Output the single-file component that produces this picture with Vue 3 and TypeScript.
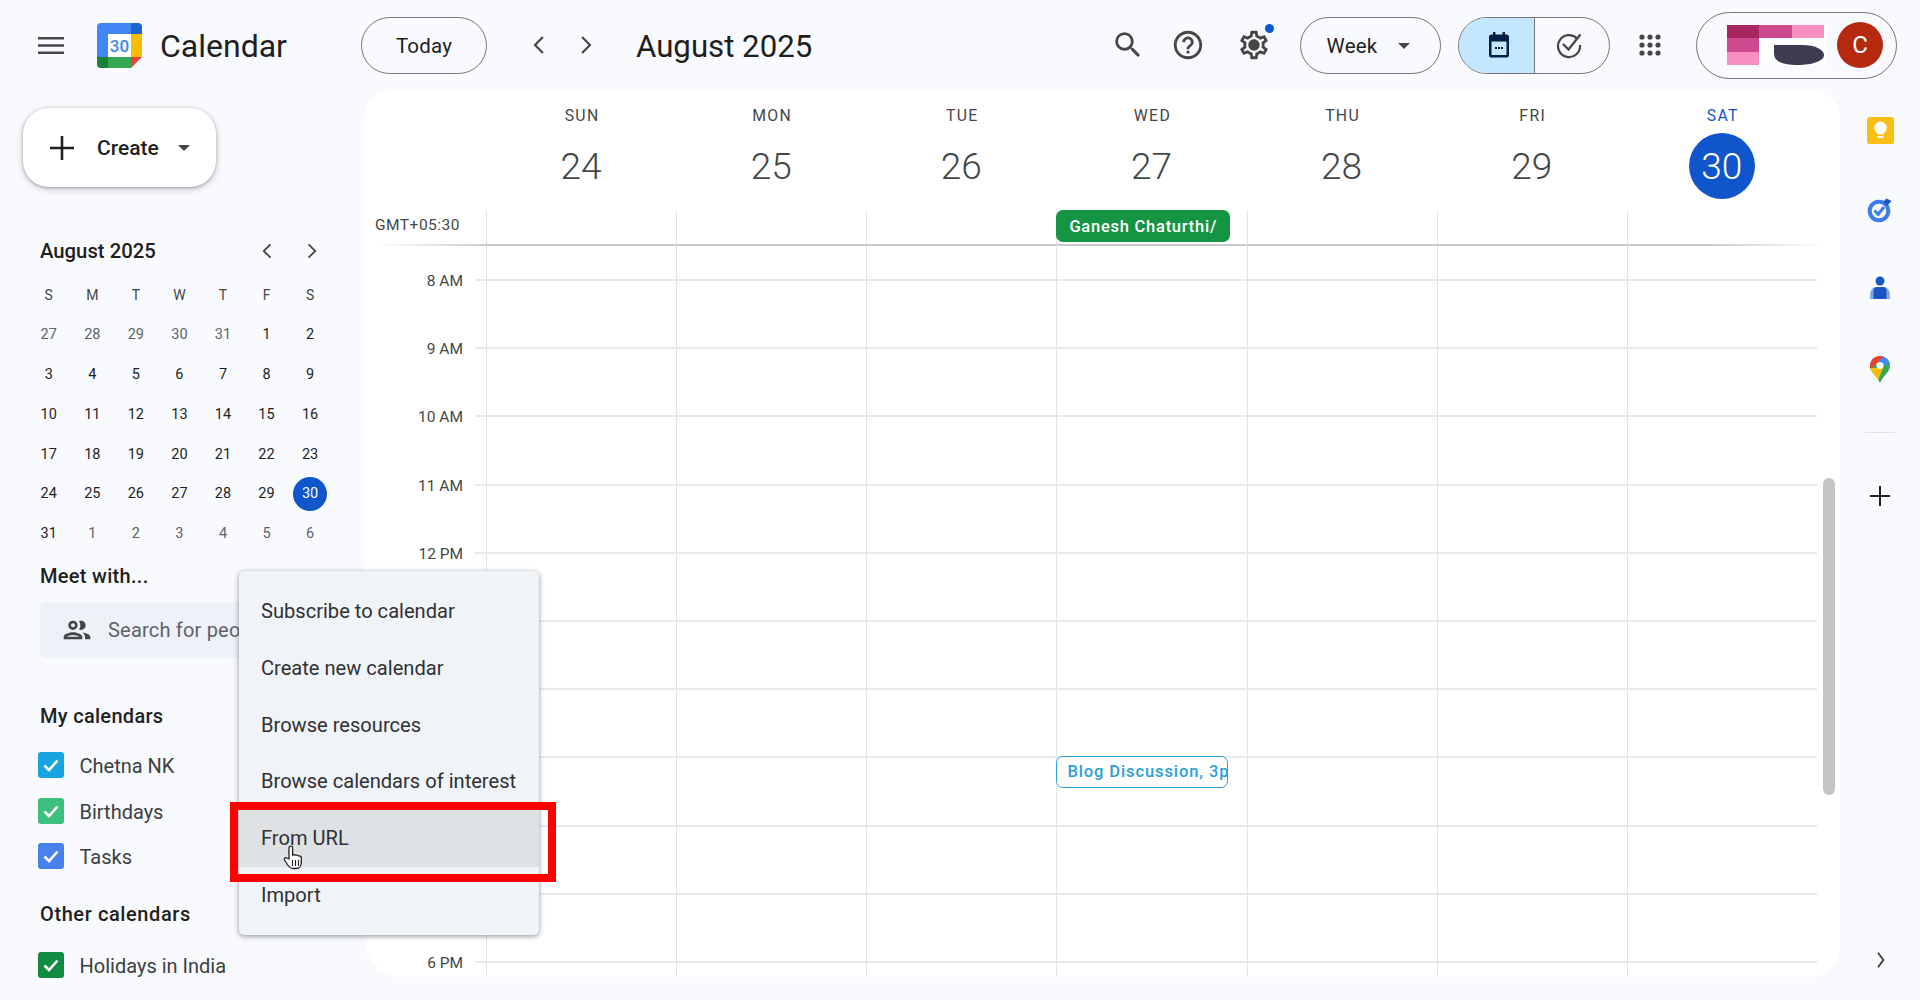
<script setup lang="ts">
interface MiniDay { n: number; muted: boolean; selected: boolean }
interface WeekDay { name: string; num: number; today: boolean }
interface Cal { name: string; color: string }

const weekLetters: string[] = ['S', 'M', 'T', 'W', 'T', 'F', 'S']
const miniRaw: number[] = [27,28,29,30,31,1,2,3,4,5,6,7,8,9,10,11,12,13,14,15,16,17,18,19,20,21,22,23,24,25,26,27,28,29,30,31,1,2,3,4,5,6]
const miniDays: MiniDay[] = miniRaw.map((n, i) => ({
  n,
  muted: i < 5 || i > 35,
  selected: i === 34,
}))
const week: WeekDay[] = [
  { name: 'SUN', num: 24, today: false },
  { name: 'MON', num: 25, today: false },
  { name: 'TUE', num: 26, today: false },
  { name: 'WED', num: 27, today: false },
  { name: 'THU', num: 28, today: false },
  { name: 'FRI', num: 29, today: false },
  { name: 'SAT', num: 30, today: true },
]
const hours: string[] = ['8 AM','9 AM','10 AM','11 AM','12 PM','1 PM','2 PM','3 PM','4 PM','5 PM','6 PM','7 PM']
const myCals: Cal[] = [
  { name: 'Chetna NK', color: '#18a4e0' },
  { name: 'Birthdays', color: '#3dbf7e' },
  { name: 'Tasks', color: '#4a80ec' },
]
const menuItems: string[] = ['Subscribe to calendar','Create new calendar','Browse resources','Browse calendars of interest','From URL','Import']
</script>

<template>
  <div class="app">
    <header class="top">
      <svg class="burger" viewBox="0 0 26 17"><path d="M0 0h26v2.6H0zM0 7.2h26v2.6H0zM0 14.4h26V17H0z" fill="#444746"/></svg>
      <svg class="logo" viewBox="0 0 45 45">
        <path d="M34 0H4a4 4 0 0 0-4 4v30h11V11h23z" fill="#4285f4"/>
        <path d="M34 0h7a4 4 0 0 1 4 4v7H34z" fill="#1a67d2"/>
        <path d="M34 11h11v23H34z" fill="#fbbc04"/>
        <path d="M11 34h23v11H11z" fill="#34a853"/>
        <path d="M0 34h11v11H4a4 4 0 0 1-4-4z" fill="#188038"/>
        <path d="M34 34h11L34 45z" fill="#ea4335"/>
        <path d="M11 11h23v23H11z" fill="#fff"/>
        <text x="22.5" y="29" text-anchor="middle" class="logo-num">30</text>
      </svg>
      <div class="brand">Calendar</div>
      <button class="pill today-btn">Today</button>
      <svg class="nav first" viewBox="0 0 24 24"><path d="M15.4 5.4 14 4l-8 8 8 8 1.4-1.4L8.8 12z" fill="#444746"/></svg>
      <svg class="nav second" viewBox="0 0 24 24"><path d="M8.6 5.4 10 4l8 8-8 8-1.4-1.4 6.6-6.6z" fill="#444746"/></svg>
      <div class="title">August 2025</div>
      <svg class="tool" viewBox="0 0 24 24"><path fill="#444746" d="M15.5 14h-.79l-.28-.27A6.471 6.471 0 0 0 16 9.5 6.5 6.5 0 1 0 9.5 16c1.61 0 3.09-.59 4.23-1.57l.27.28v.79l5 4.99L20.49 19l-4.99-5zm-6 0C7.01 14 5 11.99 5 9.5S7.01 5 9.5 5 14 7.01 14 9.5 11.99 14 9.5 14z"/></svg>
      <svg class="tool help" viewBox="0 0 24 24"><path fill="#444746" d="M11 18h2v-2h-2v2zm1-16C6.48 2 2 6.48 2 12s4.48 10 10 10 10-4.48 10-10S17.52 2 12 2zm0 18c-4.41 0-8-3.59-8-8s3.59-8 8-8 8 3.59 8 8-3.59 8-8 8zm0-14c-2.21 0-4 1.79-4 4h2c0-1.1.9-2 2-2s2 .9 2 2c0 2-3 1.75-3 5h2c0-2.25 3-2.5 3-5 0-2.21-1.79-4-4-4z"/></svg>
      <div class="gear-wrap">
        <svg class="tool" viewBox="0 0 24 24"><path fill="#444746" d="M19.43 12.98c.04-.32.07-.64.07-.98 0-.34-.03-.66-.07-.98l2.11-1.65c.19-.15.24-.42.12-.64l-2-3.46c-.09-.16-.26-.25-.44-.25-.06 0-.12.01-.17.03l-2.49 1c-.52-.4-1.08-.73-1.69-.98l-.38-2.65C14.46 2.18 14.25 2 14 2h-4c-.25 0-.46.18-.49.42l-.38 2.65c-.61.25-1.17.59-1.69.98l-2.49-1c-.06-.02-.12-.03-.18-.03-.17 0-.34.09-.43.25l-2 3.46c-.13.22-.07.49.12.64l2.11 1.65c-.04.32-.07.65-.07.98 0 .33.03.66.07.98l-2.11 1.65c-.19.15-.24.42-.12.64l2 3.46c.09.16.26.25.44.25.06 0 .12-.01.17-.03l2.49-1c.52.4 1.08.73 1.69.98l.38 2.65c.03.24.24.42.49.42h4c.25 0 .46-.18.49-.42l.38-2.65c.61-.25 1.17-.59 1.69-.98l2.49 1c.06.02.12.03.18.03.17 0 .34-.09.43-.25l2-3.46c.12-.22.07-.49-.12-.64l-2.11-1.65zm-1.98-1.71c.04.31.05.52.05.73 0 .21-.02.43-.05.73l-.14 1.13.89.7 1.08.84-.7 1.21-1.27-.51-1.04-.42-.9.68c-.43.32-.84.56-1.25.73l-1.06.43-.16 1.13-.2 1.35h-1.4l-.19-1.35-.16-1.13-1.06-.43c-.43-.18-.83-.41-1.23-.71l-.91-.7-1.06.43-1.27.51-.7-1.21 1.08-.84.89-.7-.14-1.13c-.03-.31-.05-.54-.05-.74s.02-.43.05-.73l.14-1.13-.89-.7-1.08-.84.7-1.21 1.27.51 1.04.42.9-.68c.43-.32.84-.56 1.25-.73l1.06-.43.16-1.13.2-1.35h1.39l.19 1.35.16 1.13 1.06.43c.43.18.83.41 1.23.71l.91.7 1.06-.43 1.27-.51.7 1.21-1.07.85-.89.7.14 1.13zM12 8c-2.21 0-4 1.79-4 4s1.79 4 4 4 4-1.79 4-4-1.79-4-4-4z"/></svg>
        <span class="dot"></span>
      </div>
      <button class="pill week">Week<span class="caret"></span></button>
      <div class="toggle">
        <div class="tog-left">
          <svg width="26" height="26" viewBox="0 0 26 26"><path fill="#041e49" d="M7 0h2.4v2.5h7.2V0H19v2.5h1.5A2.5 2.5 0 0 1 23 5v18a2.5 2.5 0 0 1-2.5 2.5h-15A2.5 2.5 0 0 1 3 23V5a2.5 2.5 0 0 1 2.5-2.5H7zM5.5 9.5V23h15V9.5zM9 15h2v2H9zm3 0h2v2h-2zm3 0h2v2h-2z"/></svg>
        </div>
        <div class="tog-right">
          <svg width="28" height="28" viewBox="0 0 28 28" fill="none" stroke="#444746" stroke-width="2.2"><path d="M22 7.5A11 11 0 1 0 25 14"/><path d="m8.500 13.500 5 5L25 4" stroke-linecap="round"/></svg>
        </div>
      </div>
      <svg class="apps" viewBox="0 0 24 24"><g fill="#444746"><circle cx="4" cy="4" r="2.6"/><circle cx="12" cy="4" r="2.6"/><circle cx="20" cy="4" r="2.6"/><circle cx="4" cy="12" r="2.6"/><circle cx="12" cy="12" r="2.6"/><circle cx="20" cy="12" r="2.6"/><circle cx="4" cy="20" r="2.6"/><circle cx="12" cy="20" r="2.6"/><circle cx="20" cy="20" r="2.6"/></g></svg>
      <div class="account">
        <svg class="org" viewBox="0 0 100 40">
          <path fill="#fff" d="M0 0h100v40H0z"/>
          <path fill="#a8255f" d="M0 0h32v13H0z"/>
          <path fill="#cc4a8d" d="M32 0h33v13H32zM0 13h32v14H0z"/>
          <path fill="#f78ec0" d="M65 0h32v13H65zM0 27h32v13H0z"/>
          <path fill="#3f3a50" d="M47 20h28c14 0 22 5 22 10 0 6-12 10-26 10-14 0-24-3-24-11z"/>
        </svg>
        <div class="avatar">C</div>
      </div>
    </header>

    <div class="main">
      <aside class="side">
        <button class="create">
          <svg width="24" height="24" viewBox="0 0 24 24"><path d="M10.7 0h2.6v10.7H24v2.6H13.3V24h-2.6V13.3H0v-2.6h10.7z" fill="#1f1f1f"/></svg>
          <span class="create-label">Create</span>
          <span class="caret"></span>
        </button>
        <div class="mini-head">
          <span class="mini-title">August 2025</span>
          <svg class="mini-nav" viewBox="0 0 24 24"><path d="M15.4 5.4 14 4l-8 8 8 8 1.4-1.4L8.8 12z" fill="#444746"/></svg>
          <svg class="mini-nav" viewBox="0 0 24 24"><path d="M8.6 5.4 10 4l8 8-8 8-1.4-1.4 6.6-6.6z" fill="#444746"/></svg>
        </div>
        <div class="mini-grid">
          <div v-for="(l, i) in weekLetters" :key="'w' + i" class="mini-cell letter">{{ l }}</div>
          <div v-for="(d, i) in miniDays" :key="i" class="mini-cell" :class="{ muted: d.muted }">
            <span :class="{ sel: d.selected }">{{ d.n }}</span>
          </div>
        </div>
        <div class="sec meet">Meet with...</div>
        <div class="search">
          <svg width="32" height="32" viewBox="0 0 24 24"><path fill="#444746" d="M9 13.75c-2.34 0-7 1.17-7 3.5V19h14v-1.75c0-2.33-4.66-3.5-7-3.5zM4.34 17c.84-.58 2.87-1.25 4.66-1.25s3.82.67 4.66 1.25H4.34zM9 12c1.93 0 3.5-1.57 3.5-3.5S10.93 5 9 5 5.5 6.57 5.5 8.5 7.07 12 9 12zm0-5c.83 0 1.5.67 1.5 1.5S9.83 10 9 10s-1.5-.67-1.5-1.5S8.17 7 9 7zm7.04 6.81c1.16.84 1.96 1.96 1.96 3.44V19h4v-1.75c0-2.02-3.5-3.17-5.96-3.44zM15 12c1.93 0 3.5-1.57 3.5-3.5S16.93 5 15 5c-.54 0-1.04.13-1.5.35.63.89 1 1.98 1 3.15s-.37 2.26-1 3.15c.46.22.96.35 1.5.35z"/></svg>
          <span class="search-text">Search for people</span>
        </div>
        <div class="sec mycal">My calendars</div>
        <div class="cal-list">
          <div v-for="c in myCals" :key="c.name" class="cal-row">
            <span class="box" :style="{ background: c.color }">
              <svg width="18" height="18" viewBox="0 0 18 18"><path d="m2.5 9.500 4.500 4.500 8.500-9.500" fill="none" stroke="#fff" stroke-width="2.6"/></svg>
            </span>
            <span class="cal-name">{{ c.name }}</span>
          </div>
        </div>
        <div class="sec other">Other calendars</div>
        <div class="cal-list holidays">
          <div class="cal-row">
            <span class="box box-holiday">
              <svg width="18" height="18" viewBox="0 0 18 18"><path d="m2.5 9.500 4.500 4.500 8.500-9.500" fill="none" stroke="#fff" stroke-width="2.6"/></svg>
            </span>
            <span class="cal-name">Holidays in India</span>
          </div>
        </div>
      </aside>

      <section class="panel">
        <div class="cols day-head">
          <div></div>
          <div v-for="d in week" :key="d.name" class="day" :class="{ 'is-today': d.today }">
            <div class="day-name">{{ d.name }}</div>
            <div class="day-num"><span>{{ d.num }}</span></div>
          </div>
        </div>
        <div class="cols allday">
          <div class="gmt">GMT+05:30</div>
          <div v-for="(d, i) in week" :key="d.name" class="cell">
            <div v-if="i === 3" class="ev-green">Ganesh Chaturthi/</div>
          </div>
        </div>
        <div class="cols lead">
          <div></div>
          <div v-for="d in week" :key="d.name" class="cell"></div>
        </div>
        <div v-for="(h, r) in hours" :key="h" class="cols hour">
          <div class="gutter"><span class="hlabel">{{ h }}</span></div>
          <div v-for="(d, i) in week" :key="d.name" class="cell lined">
            <div v-if="r === 7 && i === 3" class="ev-blue">Blog Discussion, 3pm</div>
          </div>
        </div>
        <div class="scroll"></div>
      </section>

      <aside class="rail">
        <div class="rail-items">
          <svg width="27" height="27" viewBox="0 0 27 27">
            <rect width="27" height="27" rx="2.5" fill="#f9bf14"/>
            <circle cx="13.5" cy="10.8" r="6.2" fill="#fff"/>
            <path d="M10.5 15h6v2.500h-6z" fill="#fff"/>
            <path d="M10.5 19h6v2h-6z" fill="#fff"/>
          </svg>
          <svg width="26" height="26" viewBox="0 0 26 26">
            <circle cx="12" cy="14" r="9.3" fill="none" stroke="#3b7ded" stroke-width="4"/>
            <path d="m7.500 13.500 3.700 3.700L17 10" fill="none" stroke="#3b7ded" stroke-width="3"/>
            <path d="m16 5 3.500-3.500L24.500 4 20 9z" fill="#1a56c4"/>
          </svg>
          <svg width="22" height="24" viewBox="0 0 22 24">
            <circle cx="11" cy="5" r="4.5" fill="#1a56c4"/>
            <path d="M1 23v-4c0-5 3-8 6-8h8c3 0 6 3 6 8v4z" fill="#82a5ee"/>
            <path d="M4.500 23v-8c0-2.500 1.500-4 3.500-4h6c2 0 3.500 1.500 3.500 4v8z" fill="#1a56c4"/>
          </svg>
          <svg class="maps" width="20" height="27" viewBox="0 0 20 27">
            <defs><clipPath id="pin"><path d="M10 0C4.500 0 0 4.300 0 9.700 0 16 6.500 19 10 27c3.500-8 10-11 10-17.300C20 4.300 15.500 0 10 0z"/></clipPath></defs>
            <g clip-path="url(#pin)">
              <path d="M0 0h20v27H0z" fill="#34a853"/>
              <path d="M10 0h10v8L10 10z" fill="#4285f4"/>
              <path d="M3 0h11L0 14V0z" fill="#ea4335"/>
              <path d="M0 12 13 12 7 27H0z" fill="#fbbc04"/>
              <circle cx="10" cy="9.5" r="3.6" fill="#fff"/>
            </g>
          </svg>
          <div class="rail-div"></div>
          <svg width="20" height="20" viewBox="0 0 20 20"><path d="M9 0h2v9h9v2h-9v9H9v-9H0V9h9z" fill="#1f1f1f"/></svg>
        </div>
        <svg class="rail-chev" width="24" height="24" viewBox="0 0 24 24"><path d="m9.400 5.400 1.200-1.400 6 8-6 8-1.200-1.400 4.800-6.600z" fill="#444746"/></svg>
      </aside>
    </div>

    <div class="menu">
      <div v-for="(m, i) in menuItems" :key="m" class="menu-item" :class="{ hot: i === 4 }">{{ m }}</div>
    </div>
    <div class="redbox"></div>
    <svg class="cursor" width="22" height="26" viewBox="0 0 22 26">
      <path d="M6 14V3a1.800 1.800 0 0 1 3.600 0v7l1.500-.3c.5 0 1 .2 1.200.5l1.500-.1c.5 0 1 .3 1.200.7l1.300 0c1.200 0 2 1 2 2.200v5c0 3-2 5.500-5 5.500H10c-2 0-3.400-.8-4.500-2.500L1.500 15c-.8-1.200.8-2.900 2.200-2z" fill="#fff" stroke="#1f1f1f" stroke-width="1.3" stroke-linejoin="round"/>
      <path d="M9.500 15v6M12.500 15v6M15.500 15v6" stroke="#1f1f1f" stroke-width="1.1"/>
    </svg>
  </div>
</template>

<style>
html, body { margin: 0; background: #f8fafd; }
</style>

<style scoped>
.app {
  position: relative;
  width: 1920px;
  height: 1000px;
  overflow: hidden;
  background: #f8fafd;
  color: #1f1f1f;
  font-family: Roboto, "Liberation Sans", sans-serif;
}
.top { height: 90px; display: flex; align-items: center; padding: 0 23px 0 38px; box-sizing: border-box; }
.burger { width: 26px; height: 17px; flex: none; }
.logo { width: 45px; height: 45px; margin-left: 33px; flex: none; }
.logo-num { font: 500 17px Roboto, sans-serif; fill: #4285f4; }
.brand { width: 201px; margin-left: 18px; padding-top: 2px; font-size: 32px; color: #1f1f1f; flex: none; }
.pill {
  font: 400 20.5px Roboto, sans-serif;
  letter-spacing: .2px;
  color: #1f1f1f;
  background: transparent;
  border: 1.5px solid #747775;
  border-radius: 29px;
  height: 57px;
  box-sizing: border-box;
  flex: none;
  padding: 2px 0 0;
}
.today-btn { width: 126px; }
.nav { width: 26px; height: 26px; flex: none; }
.nav.first { margin-left: 40px; }
.nav.second { margin-left: 19px; }
.title { margin-left: 38px; padding-top: 2px; font-size: 31.2px; color: #1f1f1f; flex: 1; }
.tool { width: 34px; height: 34px; flex: none; display: block; }
.help { margin-left: 26px; }
.gear-wrap { position: relative; margin-left: 32px; flex: none; }
.dot { position: absolute; width: 9px; height: 9px; border-radius: 50%; background: #0b57d0; right: -3px; top: -4px; }
.week { width: 141px; margin-left: 29px; display: flex; align-items: center; justify-content: center; gap: 21px; padding-right: 4px; }
.caret { width: 0; height: 0; border-left: 6px solid transparent; border-right: 6px solid transparent; border-top: 6px solid #444746; flex: none; }
.toggle {
  display: flex;
  width: 152px;
  height: 57px;
  margin-left: 17px;
  border: 1.5px solid #747775;
  border-radius: 29px;
  box-sizing: border-box;
  overflow: hidden;
  flex: none;
}
.tog-left { width: 76px; background: #c2e7ff; border-right: 1.5px solid #747775; display: flex; align-items: center; justify-content: center; padding-left: 5px; box-sizing: border-box; }
.tog-right { flex: 1; display: flex; align-items: center; justify-content: center; padding-right: 7px; box-sizing: border-box; }
.apps { width: 24px; height: 24px; margin-left: 28px; flex: none; }
.account {
  margin-left: 34px;
  width: 201px;
  height: 67px;
  border: 1.5px solid #747775;
  border-radius: 34px;
  box-sizing: border-box;
  display: flex;
  align-items: center;
  padding-left: 30px;
  flex: none;
}
.org { width: 100px; height: 40px; flex: none; }
.avatar {
  width: 46px;
  height: 46px;
  margin-left: 10px;
  border-radius: 50%;
  background: #b5290f;
  color: #fff;
  font-size: 24px;
  display: flex;
  align-items: center;
  justify-content: center;
  flex: none;
}

.main { display: flex; height: 910px; }
.side { width: 364px; flex: none; height: 910px; overflow: hidden; padding-top: 18px; box-sizing: border-box; }
.create {
  display: flex;
  align-items: center;
  width: 193px;
  height: 79px;
  margin-left: 23px;
  padding: 0 0 0 27px;
  box-sizing: border-box;
  border: 0;
  border-radius: 26px;
  background: #fff;
  box-shadow: 0 1px 3px rgba(60, 64, 67, .35), 0 2px 6px 1px rgba(60, 64, 67, .2);
  font: 500 21px Roboto, sans-serif;
  color: #1f1f1f;
}
.create-label { margin-left: 23px; margin-right: 19px; }
.mini-head { display: flex; align-items: center; height: 40px; margin: 44px 0 4px 40px; }
.mini-title { font-size: 20.3px; font-weight: 500; width: 217px; color: #1f1f1f; flex: none; }
.mini-nav { width: 22px; height: 22px; margin-right: 21px; flex: none; }
.mini-grid { display: grid; grid-template-columns: repeat(7, 43.55px); grid-auto-rows: 39.8px; margin-left: 27px; }
.mini-cell { display: flex; align-items: center; justify-content: center; font-size: 14.5px; font-weight: 400; color: #1f1f1f; }
.mini-cell.letter { color: #444746; font-size: 14px; }
.mini-cell.muted { color: #5f6368; }
.sel { width: 34px; height: 34px; border-radius: 50%; background: #1155cc; color: #fff; display: flex; align-items: center; justify-content: center; }
.sec { font-size: 20px; font-weight: 500; line-height: 24px; margin-left: 40px; color: #1f1f1f; letter-spacing: .3px; }
.meet { margin-top: 10px; }
.search {
  margin: 14px 0 0 40px;
  width: 300px;
  height: 56px;
  background: #eef1f7;
  border-radius: 5px;
  display: flex;
  align-items: center;
  padding-left: 21px;
  box-sizing: border-box;
  font-size: 20px;
  letter-spacing: .2px;
  color: #5f6368;
  white-space: nowrap;
  overflow: hidden;
}
.search-text { margin-left: 15px; padding-top: 1px; }
.mycal { margin-top: 46px; }
.cal-list { margin: 15px 0 0 38px; }
.cal-row { display: flex; align-items: center; height: 45.5px; font-size: 20px; color: #3c4043; }
.cal-name { padding-top: 2px; }
.box { width: 26px; height: 26px; border-radius: 3px; margin-right: 15.5px; display: flex; align-items: center; justify-content: center; flex: none; }
.box-holiday { background: #118a42; }
.other { margin-top: 23px; letter-spacing: .6px; }
.holidays { margin-top: 16px; }

.panel { position: relative; width: 1476px; height: 887px; flex: none; background: #fff; border-radius: 28px 28px 28px 40px; overflow: hidden; }
.cols { display: grid; grid-template-columns: 122px repeat(7, 190.14px); }
.day-head { height: 120px; }
.day { text-align: center; color: #444746; }
.day-name { margin-top: 16px; height: 20px; line-height: 20px; font-size: 15.8px; font-weight: 400; letter-spacing: 1.3px; padding-left: 2px; }
.day-num { margin-top: 7px; height: 66px; display: flex; justify-content: center; }
.day-num span { width: 66px; height: 66px; border-radius: 50%; display: flex; align-items: center; justify-content: center; font-size: 37px; font-weight: 300; }
.is-today .day-name { color: #1155cc; }
.is-today .day-num span { background: #1155cc; color: #fff; }
.allday { height: 35px; position: relative; }
.allday::after {
  content: "";
  position: absolute;
  left: 10px;
  right: 16px;
  bottom: -1px;
  height: 2px;
  background: linear-gradient(90deg, transparent, #c9cacb 8%, #c9cacb 92%, transparent);
}
.gmt { font-size: 15.5px; letter-spacing: .5px; line-height: 30px; padding-left: 11px; color: #444746; white-space: nowrap; }
.cell { border-left: 1.5px solid #e3e4e9; box-sizing: border-box; position: relative; min-width: 0; }
.lead { height: 34px; }
.hour { height: 68.2px; }
.lined { border-top: 2px solid #e8e9ee; }
.gutter { position: relative; text-align: right; padding-right: 23px; box-sizing: border-box; }
.gutter::after { content: ""; position: absolute; top: 0; right: 0; width: 11px; height: 2px; background: #e8e9ee; }
.hlabel { display: block; margin-top: -10px; font-size: 15.5px; line-height: 24px; color: #444746; }
.ev-green {
  position: absolute;
  left: -1px;
  top: 0;
  width: 174px;
  height: 32px;
  border-radius: 7px;
  background: #159544;
  color: #fff;
  font-size: 16.5px;
  letter-spacing: .75px;
  font-weight: 500;
  line-height: 33px;
  padding-left: 13px;
  box-sizing: border-box;
  z-index: 2;
  white-space: nowrap;
  overflow: hidden;
}
.ev-blue {
  position: absolute;
  left: -1px;
  top: -2px;
  width: 172px;
  height: 32px;
  border: 1.5px solid #2d9fd8;
  border-radius: 7px;
  background: #fff;
  color: #2d9fd8;
  font-size: 16.5px;
  letter-spacing: .9px;
  font-weight: 500;
  line-height: 30px;
  padding-left: 10px;
  box-sizing: border-box;
  z-index: 2;
  white-space: nowrap;
  overflow: hidden;
}
.scroll { position: absolute; right: 5px; top: 388px; width: 12px; height: 317px; border-radius: 6px; background: #c4c4c4; }

.rail { width: 80px; flex: none; display: flex; flex-direction: column; align-items: center; height: 910px; }
.rail-items { display: flex; flex-direction: column; align-items: center; padding-top: 27px; gap: 53px; }
.maps { margin-top: 3px; }
.rail-div { width: 30px; height: 1px; background: #e3e4e9; margin-top: -4px; }
.rail-chev { margin-top: auto; margin-bottom: 28px; }

.menu {
  position: absolute;
  left: 239px;
  top: 571px;
  width: 300px;
  height: 364px;
  padding-top: 12px;
  box-sizing: border-box;
  background: #f0f3f7;
  border-radius: 5px;
  box-shadow: 0 1px 4px rgba(60, 64, 67, .4), 0 2px 6px rgba(60, 64, 67, .2);
  z-index: 5;
}
.menu-item { height: 56.8px; line-height: 56.8px; padding-left: 22px; font-size: 20.1px; color: #303134; white-space: nowrap; }
.hot { background: #dfe2e5; }
.redbox { position: absolute; left: 230px; top: 802px; width: 326px; height: 80px; box-sizing: border-box; border: 8px solid #f00; z-index: 6; }
.cursor { position: absolute; left: 283px; top: 845px; z-index: 7; }
</style>
